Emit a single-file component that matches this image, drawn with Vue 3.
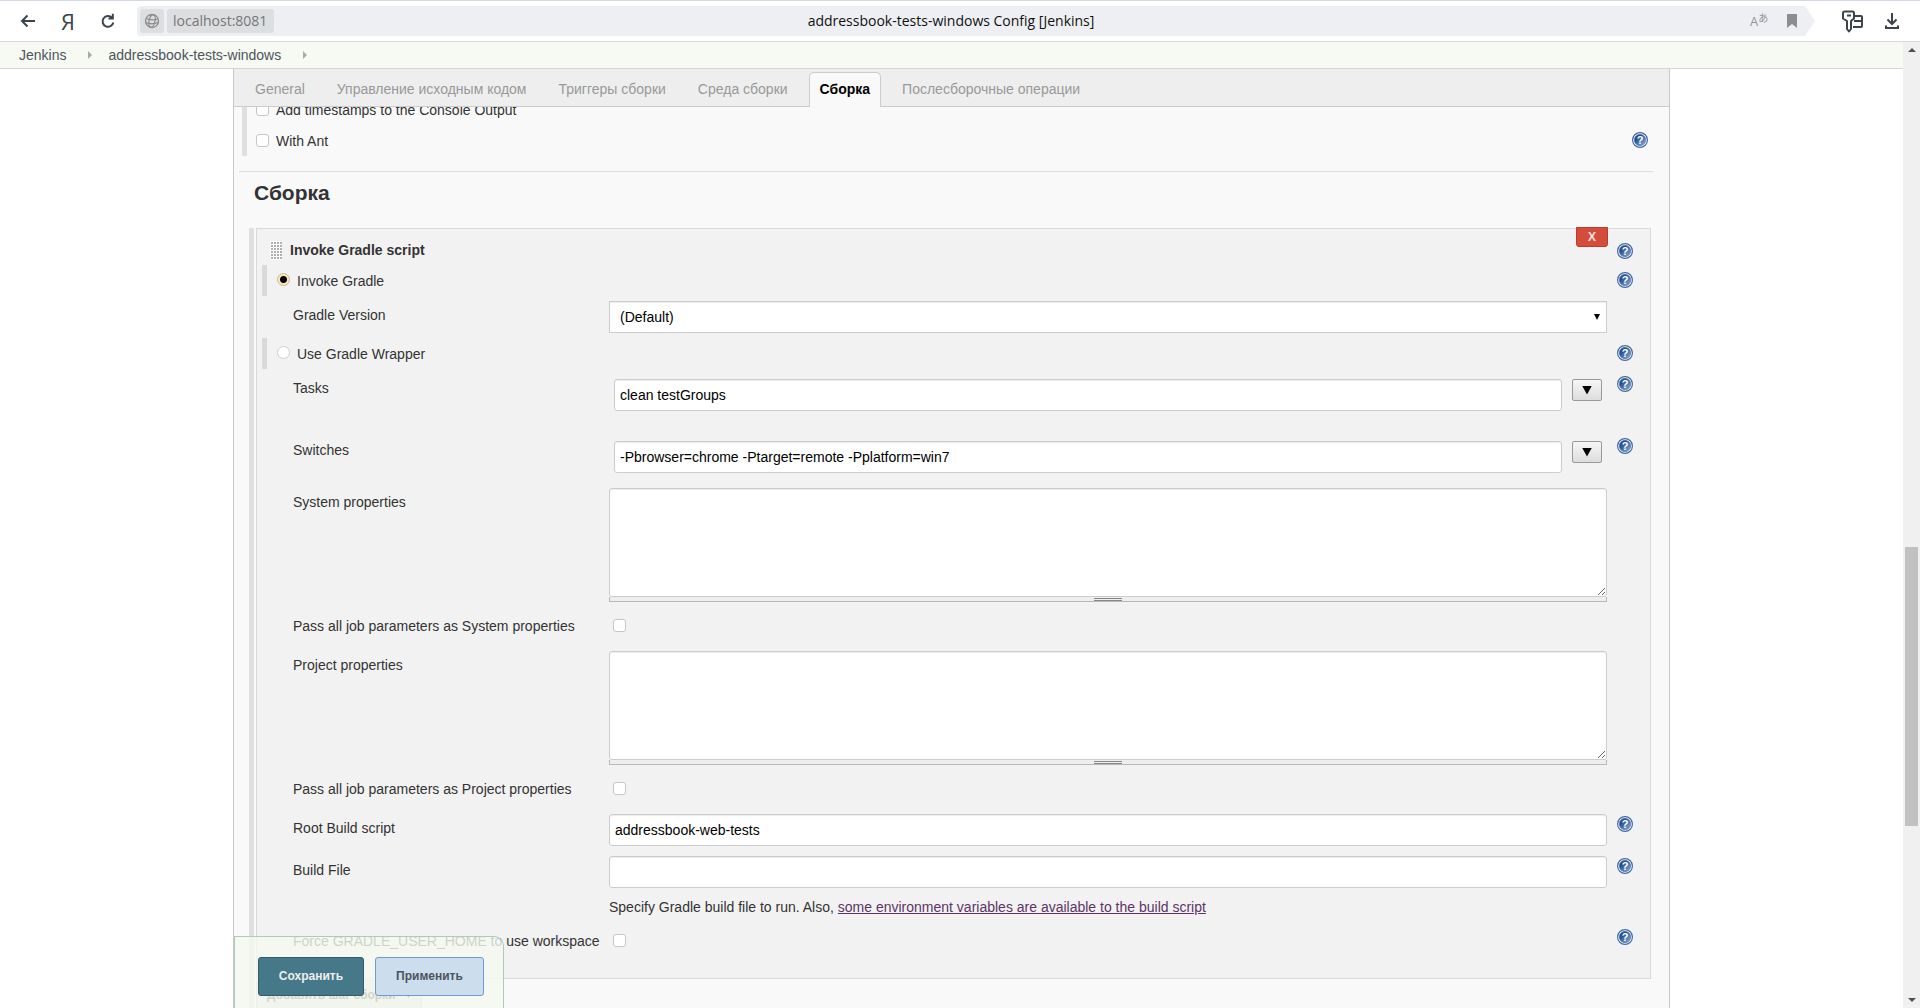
<script setup>
import { ref, h } from 'vue'

const tabs = ['General', 'Управление исходным кодом', 'Триггеры сборки', 'Среда сборки', 'Сборка', 'Послесборочные операции']
const activeTab = ref('Сборка')
const mode = ref('gradle')
const version = ref('(Default)')
const tasks = ref('clean testGroups')
const switches = ref('-Pbrowser=chrome -Ptarget=remote -Pplatform=win7')
const rootScript = ref('addressbook-web-tests')
const buildFile = ref('')

const HelpIcon = () =>
  h('button', { type: 'button', 'aria-label': 'Help', class: 'help-button' }, [
    h('svg', { width: 16, height: 16, viewBox: '0 0 16 16' }, [
      h('defs', [
        h('linearGradient', { id: 'help-fill', x1: 0, y1: 0, x2: 1, y2: 1 }, [
          h('stop', { offset: '0.3', 'stop-color': '#24508f' }),
          h('stop', { offset: '1', 'stop-color': '#8fb2dc' })
        ])
      ]),
      h('circle', { cx: 8, cy: 8, r: 7.4, fill: '#fff', stroke: '#40689f', 'stroke-width': 1.2 }),
      h('circle', { cx: 8, cy: 8, r: 5.7, fill: 'url(#help-fill)', stroke: '#2d5794', 'stroke-width': 0.5 }),
      h('text', { x: 8, y: 12, 'text-anchor': 'middle', 'font-size': 11, 'font-weight': 700, fill: '#fff' }, '?')
    ])
  ])
</script>

<template>
  <div class="window">
    <header class="browser">
      <nav class="nav">
        <button type="button" aria-label="Back">
          <svg width="16" height="16" viewBox="0 0 16 16"><path d="M15 8H2M7.500 2.500L2 8l5.500 5.500" fill="none" stroke="#3b444b" stroke-width="2" /></svg>
        </button>
        <button type="button" class="ya">Я</button>
        <button type="button" aria-label="Reload">
          <svg width="16" height="16" viewBox="0 0 16 16"><path d="M13.300 9.500A5.400 5.400 0 1 1 12 4.800M8.500 5.500h4.300V0.800" fill="none" stroke="#3b444b" stroke-width="2" /></svg>
        </button>
      </nav>
      <div class="address">
        <span class="chip globe">
          <svg width="16" height="16" viewBox="0 0 16 16" fill="none" stroke="#8b8c8e" stroke-width="1.300"><circle cx="8" cy="8" r="6.500" /><ellipse cx="8" cy="8" rx="3" ry="6.500" transform="rotate(12 8 8)" /><path d="M2 5.500q6 2.500 12 .5M1.500 9.500q6 2.500 12.500 0" /></svg>
        </span>
        <span class="chip host">localhost:8081</span>
        <span class="page-title">addressbook-tests-windows Config [Jenkins]</span>
        <span class="translate"><span>A</span><span class="kana">あ</span></span>
        <svg class="bookmark" width="10" height="14" viewBox="0 0 10 14"><path d="M0 0h10v14l-5-4-5 4z" fill="#8c8d90" /></svg>
      </div>
      <svg class="keys" width="24" height="24" viewBox="0 0 24 24" fill="none" stroke="#3b444b" stroke-width="2" stroke-linejoin="round"><path d="M3 4q0-1.500 1.500-1.500h8q1.500 0 1.500 1.500v5.500L11 12v8l-2 2.500L7 20v-8L3 9.500zM7 6.500h4M15 7h6q1 0 1 1v9q0 1-1 1h-8M14 12h8" /></svg>
      <svg class="download" width="16" height="18" viewBox="0 0 16 18" fill="none" stroke="#3b444b" stroke-width="2"><path d="M8 1v11M3.500 7.500L8 12l4.500-4.500M2 13.500V16h12v-2.500" /></svg>
    </header>

    <div class="viewport">
      <div class="page">
        <nav class="crumbs">
          <a href="#">Jenkins</a><i class="sep"></i>
          <a href="#">addressbook-tests-windows</a><i class="sep"></i>
        </nav>

        <main class="panel">
          <div class="tabs">
            <button v-for="t in tabs" :key="t" type="button" :class="{ active: t === activeTab }" @click="activeTab = t">{{ t }}</button>
          </div>

          <div class="content">
            <div class="options">
              <div class="option"><label><input type="checkbox" />Add timestamps to the Console Output</label></div>
              <div class="option"><label><input type="checkbox" />With Ant</label><HelpIcon /></div>
            </div>
            <h2>Сборка</h2>

            <div class="builders">
              <section class="builder">
                <button type="button" class="delete">X</button>
                <div class="row head">
                  <b><i class="grip"></i>Invoke Gradle script</b>
                  <HelpIcon />
                </div>
                <div class="row radio-row">
                  <label><input v-model="mode" type="radio" name="mode" value="gradle" />Invoke Gradle</label>
                  <HelpIcon />
                </div>
                <div class="row field">
                  <label for="version">Gradle Version</label>
                  <div class="control select">
                    <select id="version" v-model="version"><option>(Default)</option></select>
                    <i class="arrow"></i>
                  </div>
                </div>
                <div class="row radio-row">
                  <label><input v-model="mode" type="radio" name="mode" value="wrapper" />Use Gradle Wrapper</label>
                  <HelpIcon />
                </div>
                <div class="row field tall">
                  <label for="tasks">Tasks</label>
                  <div class="control expandable">
                    <input id="tasks" v-model="tasks" type="text" /><button type="button" aria-label="Expand tasks"><i class="arrow big"></i></button>
                  </div>
                  <HelpIcon />
                </div>
                <div class="row field">
                  <label for="switches">Switches</label>
                  <div class="control expandable">
                    <input id="switches" v-model="switches" type="text" /><button type="button" aria-label="Expand switches"><i class="arrow big"></i></button>
                  </div>
                  <HelpIcon />
                </div>
                <template v-for="kind in ['System', 'Project']" :key="kind">
                  <div class="row field">
                    <label :for="kind + '-props'">{{ kind }} properties</label>
                    <div class="control">
                      <textarea :id="kind + '-props'"></textarea>
                      <div class="resizer"><i></i></div>
                    </div>
                  </div>
                  <div class="row field check">
                    <label :for="kind + '-pass'">Pass all job parameters as {{ kind }} properties</label>
                    <div class="control"><input :id="kind + '-pass'" type="checkbox" /></div>
                  </div>
                </template>
                <div class="row field">
                  <label for="root">Root Build script</label>
                  <div class="control"><input id="root" v-model="rootScript" type="text" /></div>
                  <HelpIcon />
                </div>
                <div class="row field">
                  <label for="file">Build File</label>
                  <div class="control">
                    <input id="file" v-model="buildFile" type="text" />
                    <p>Specify Gradle build file to run. Also, <a href="#">some environment variables are available to the build script</a></p>
                  </div>
                  <HelpIcon />
                </div>
                <div class="row field check">
                  <label for="force">Force GRADLE_USER_HOME to use workspace</label>
                  <div class="control"><input id="force" type="checkbox" /></div>
                  <HelpIcon />
                </div>
              </section>
              <button type="button" class="add">Добавить шаг сборки<i class="arrow"></i></button>
            </div>
          </div>

          <div class="actions">
            <button type="submit" class="save">Сохранить</button>
            <button type="button" class="apply">Применить</button>
          </div>
        </main>
      </div>

      <div class="scrollbar">
        <i class="up"></i>
        <div class="track"><div class="thumb"></div></div>
        <i class="down"></i>
      </div>
    </div>
  </div>
</template>

<style>
body { margin: 0; }
.help-button { flex: none; width: 16px; height: 16px; padding: 0; border: 0; background: none; }
.help-button svg { display: block; font-family: "Liberation Sans", sans-serif; }
</style>

<style scoped>
* { box-sizing: border-box; }
.window { height: 100vh; display: flex; flex-direction: column; overflow: hidden; background: #fff; color: #333; font: 14px/18px "Liberation Sans", Arial, sans-serif; }
button, input, select, textarea { font: inherit; margin: 0; }
button { padding: 0; }

.browser { height: 42px; flex: none; display: flex; align-items: center; border-top: 1px solid #d3d9e5; border-bottom: 1px solid #d9dad5; padding-right: 20px; }
.nav { width: 137px; display: flex; padding-left: 19px; gap: 22px; }
.nav button { width: 18px; height: 24px; display: flex; align-items: center; justify-content: center; border: 0; background: none; color: #3b444b; }
.nav .ya { font: 22px/24px "Open Sans", sans-serif; }
.address { flex: 1; height: 30px; display: flex; align-items: center; padding: 3px 18px 3px 3px; background: #eeeff2; border-radius: 4px 0 0 4px; clip-path: polygon(0 0, calc(100% - 10px) 0, 100% 50%, calc(100% - 10px) 100%, 0 100%); font: 14px/24px "Open Sans", sans-serif; }
.chip { height: 24px; background: #dddee0; border-radius: 3px; color: #75767a; }
.globe { width: 24px; display: flex; align-items: center; justify-content: center; margin-right: 3px; }
.host { width: 107px; padding-left: 6px; }
.page-title { flex: 1; text-align: center; padding-right: 122px; color: #111; }
.translate { display: flex; width: 37px; color: #939498; font-size: 13px; }
.kana { font: 10px/18px "Noto Sans CJK JP", sans-serif; }
.keys { margin-left: 25px; }
.download { margin-left: 20px; }

.viewport { flex: 1; min-height: 0; display: flex; }
.page { flex: 1; min-width: 0; display: flex; flex-direction: column; }
.crumbs { height: 27px; flex: none; display: flex; align-items: center; padding-left: 19px; background: #f6faf2; border-bottom: 1px solid #d3d9cd; }
.crumbs a { color: #4d545d; text-decoration: none; }
.sep { margin: 0 16px 0 22px; border-left: 4px solid #aaa; border-top: 4px solid transparent; border-bottom: 4px solid transparent; }
.panel { flex: 1; min-height: 0; margin: 0 233px; position: relative; overflow: hidden; background: #f9f9f9; border: solid #c8c8c8; border-width: 0 1px; }
.tabs { height: 38px; position: relative; z-index: 1; display: flex; align-items: flex-end; gap: 10px; padding-left: 10px; background: linear-gradient(#ccc, #ccc) bottom / 100% 1px no-repeat #eee; }
.tabs button { height: 35px; padding: 0 10px 2px; border: 1px solid transparent; border-bottom: 0; background: none; color: #999; }
.tabs .active { background: #f9f9f9; border-color: #ccc; border-radius: 5px 5px 0 0; color: #000; font-weight: bold; }

.content { margin-top: -13px; padding: 0 16px 0 5px; }
.options { position: relative; margin-left: 3px; border-left: 5px solid #dfdfdf; }
.option { height: 31px; display: flex; justify-content: space-between; padding: 7px 5px 0 9px; }
.option label { height: 18px; display: flex; align-items: center; gap: 7px; }
input[type="checkbox"], input[type="radio"] { appearance: none; flex: none; width: 13px; height: 13px; margin-bottom: 2px; background: #fff; border: 1px solid #c6c6c6; border-radius: 3px; }
input[type="radio"] { border-radius: 50%; border-color: #d0d0d0; }
input[type="radio"]:checked { background: radial-gradient(circle, #000 3px, #f7e6c0 4px); border-color: #d0b888; }
h2 { margin: 15px 0 0; padding: 8px 15px 23px; border-top: 1px solid #dcdcdc; font-size: 21px; line-height: 25px; }

.builders { margin-left: 10px; padding: 0 2px; border-left: 5px solid #dfdfdf; }
.builder { position: relative; height: 751px; border: 1px solid #d9d9d9; background: #f2f2f2; padding-right: 17px; }
.delete { position: absolute; right: 42px; top: -2px; width: 32px; height: 20px; border: 1px solid #b83c31; border-radius: 0 0 3px 3px; background: #d54c3c; color: #f6dfdc; font: bold 12px/16px "Open Sans", sans-serif; }
.row { display: flex; }
.row > .help-button { margin-top: 7px; }
.head { height: 36px; justify-content: space-between; padding: 7px 0 0 13px; }
.head b { display: flex; align-items: center; gap: 8px; height: 28px; }
.grip { width: 12px; height: 19px; background: linear-gradient(90deg, #fff 1px, transparent 1px) 0 0 / 3px 3px, linear-gradient(#fff 1px, transparent 1px) 0 0 / 3px 3px, #b0b0b0; }
.radio-row { height: 31px; justify-content: space-between; }
.radio-row label { display: flex; align-items: center; gap: 7px; margin-left: 5px; padding-left: 10px; border-left: 5px solid #d9d9d9; }
.field { min-height: 42px; padding-left: 36px; }
.field > label { flex: none; width: 316px; padding-top: 10px; }
.control { flex: 1; position: relative; padding: 5px 0; margin-right: 10px; }
.row > .control:last-child { margin-right: 26px; }
input[type="text"], select, textarea { display: block; width: 100%; height: 32px; padding: 0 5px; border: 1px solid #ccc; border-radius: 3px; background: #fff; color: #000; box-shadow: inset 0 1px 1px rgba(0, 0, 0, 0.08); outline: none; }
select { appearance: none; border-radius: 0; padding: 0 10px; }
.arrow { display: block; width: 6px; height: 6px; background: #000; clip-path: polygon(0 0, 100% 0, 50% 100%); }
.arrow.big { width: 10px; height: 9px; }
.select .arrow { position: absolute; right: 7px; top: 18px; }
.tall { height: 62px; }
.expandable { display: flex; gap: 10px; padding: 10px 5px; }
.expandable button { flex: none; width: 30px; height: 22px; display: flex; align-items: center; justify-content: center; border: 1px solid #999; border-radius: 2px; background: linear-gradient(#f6f6f6, #ddd); }
textarea { height: 109px; resize: both; }
.resizer { height: 5px; border: solid #b9b9b3; border-width: 0 1px 1px; background: #eee; display: flex; justify-content: center; }
.resizer i { width: 28px; height: 3px; margin-top: 1px; border: solid #888; border-width: 1px 0; }
.check { min-height: 0; height: 39px; }
.check .control { padding: 12px 4px; }
.control p { margin: 10px 0 1px; line-height: 18px; }
.control p a { color: #5c3566; }
.add { display: flex; align-items: center; gap: 10px; height: 30px; margin-top: 1px; padding: 0 10px; border: 1px solid #ccc; border-radius: 3px; background: #dfe4e4; color: #444; font-size: 12px; font-weight: bold; }

.actions { position: absolute; left: 0; bottom: 0; width: 270px; height: 72px; display: flex; gap: 11px; padding: 20px 0 0 23px; border: 1px solid #a8cdb9; border-bottom: 0; border-radius: 0 10px 0 0; background: rgba(245, 249, 239, 0.8); }
.actions button { flex: none; height: 39px; padding-bottom: 2px; border-radius: 3px; font-size: 12px; font-weight: bold; }
.save { width: 106px; border: 1px solid #355a6b; background: #457889; color: #eee; }
.apply { width: 109px; border: 1px solid #6b9bd0; background: #ccdded; color: #4d545d; }

.scrollbar { width: 17px; flex: none; display: flex; flex-direction: column; align-items: center; justify-content: space-between; padding: 6px 0; background: #f0f0f0; }
.up, .down { border: 4px solid transparent; }
.up { border-top: 0; border-bottom-color: #505050; }
.down { border-bottom: 0; border-top-color: #505050; }
.track { flex: 1; width: 13px; display: flex; flex-direction: column; }
.track::before { content: ""; flex: 495; }
.thumb { flex: 279; background: #c1c1c1; }
.track::after { content: ""; flex: 172; }
</style>
